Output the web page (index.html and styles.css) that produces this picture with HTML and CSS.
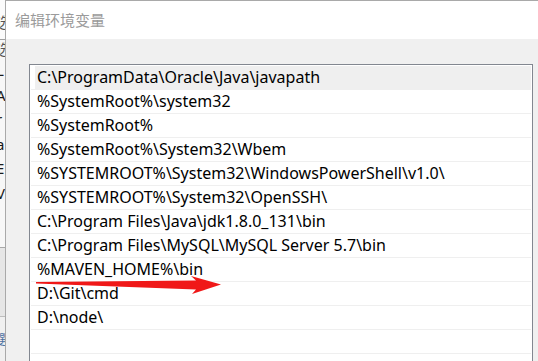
FILE: index.html
```html
<!DOCTYPE html>
<html lang="zh-CN">

<head>
    <meta charset="UTF-8">
    <meta name="viewport" content="width=device-width, initial-scale=1.0">
    <title>编辑环境变量</title>
    <link rel="stylesheet" href="styles.css">
</head>

<body>
    <!-- ventana de fondo, solo se ve un borde -->
    <div class="side">
        <div class="side-top"><span>选</span></div>
        <div class="side-list">
            <span>选</span>
            <span>L</span>
            <span>A</span>
            <span>r</span>
            <span>a</span>
            <span>E</span>
            <span>V</span>
        </div>
        <div class="side-mid"></div>
        <div class="side-bottom"><span>選</span></div>
    </div>

    <div class="dialog">
        <div class="titlebar">编辑环境变量</div>
        <div class="content">
            <div class="list">
                <div class="row selected"><span>C:\ProgramData\Oracle\Java\javapath</span></div>
                <div class="row"><span>%SystemRoot%\system32</span></div>
                <div class="row"><span>%SystemRoot%</span></div>
                <div class="row"><span>%SystemRoot%\System32\Wbem</span></div>
                <div class="row"><span>%SYSTEMROOT%\System32\WindowsPowerShell\v1.0\</span></div>
                <div class="row"><span>%SYSTEMROOT%\System32\OpenSSH\</span></div>
                <div class="row"><span>C:\Program Files\Java\jdk1.8.0_131\bin</span></div>
                <div class="row"><span>C:\Program Files\MySQL\MySQL Server 5.7\bin</span></div>
                <div class="row"><span>%MAVEN_HOME%\bin</span></div>
                <div class="row"><span>D:\Git\cmd</span></div>
                <div class="row"><span>D:\node\</span></div>
                <div class="row"><span></span></div>
                <div class="row"><span></span></div>
            </div>
        </div>
    </div>

    <!-- flecha roja dibujada encima -->
    <svg class="arrow" width="538" height="361" viewBox="0 0 538 361">
        <polygon points="36,282 196,280.5 191,276 221,284.5 192,294 196,289.5 36,283.6" fill="#f01818" />
    </svg>
</body>

</html>
```

FILE: styles.css
```css
body {
    margin: 0;
    width: 538px;
    height: 361px;
    overflow: hidden;
    display: flex;
    background-color: #f0f0f0;
    font-family: "Noto Sans", "Noto Sans CJK SC", sans-serif;
    position: relative;
}

.side {
    width: 5px;
    flex-shrink: 0;
    display: flex;
    flex-direction: column;
    overflow: hidden;
    font-size: 15px;
    color: #1a1a1a;
}

.side span {
    display: block;
    width: 5px;
    text-indent: -4px;
    white-space: nowrap;
    line-height: 24.5px;
}

.side-top {
    height: 40px;
    background-color: #fbfbfb;
    border-bottom: 1px solid #a0a0a0;
    box-sizing: border-box;
}

.side-top span {
    line-height: 44px;
    color: #555;
}

.side-list {
    height: 212px;
    background-color: #f7f7f7;
    border-bottom: 1px solid #a8a8a8;
    box-sizing: border-box;
}

.side-list span:first-child {
    line-height: 18px;
    color: #555;
}

.side-mid {
    height: 71px;
    background-color: #e6e6e6;
    border-bottom: 1px solid #bdbdbd;
    box-sizing: border-box;
}

.side-bottom {
    flex: 1;
    background-color: #f0f0f0;
}

.side-bottom span {
    line-height: 44px;
    color: #4a6fa0;
    font-size: 13px;
}

.dialog {
    flex: 1;
    display: flex;
    flex-direction: column;
    min-height: 0;
    border-left: 1px solid #a9a9a9;
    border-top: 1px solid #a9a9a9;
}

.titlebar {
    height: 38px;
    flex-shrink: 0;
    background-color: #ffffff;
    padding-left: 9px;
    font-family: "Noto Sans CJK SC", sans-serif;
    font-size: 15px;
    line-height: 38px;
    color: #9b9b9b;
}

.content {
    flex: 1;
    min-height: 0;
    padding: 25px 5px 0 23px;
}

.list {
    box-sizing: border-box;
    height: 100%;
    overflow: hidden;
    background-color: #ffffff;
    border: 1px solid #828790;
    border-bottom: 0;
    padding: 1px 1px 0 1px;
}

.row {
    height: 23px;
    border-bottom: 1px solid #efefef;
    padding-left: 4px;
    background-clip: content-box;
    font-size: 16px;
    line-height: 23px;
    color: #000000;
    white-space: nowrap;
}

.row span {
    padding-left: 2px;
}

.row.selected {
    background-color: #efefef;
}

.arrow {
    position: absolute;
    left: 0;
    top: 0;
    pointer-events: none;
}
```
